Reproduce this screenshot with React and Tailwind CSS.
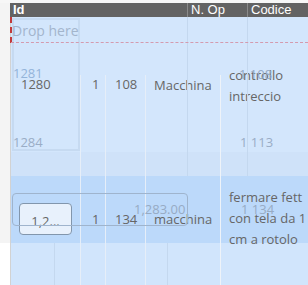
import React from "react";

const font = { fontFamily: '"Open Sans", "Noto Sans", sans-serif' };
const txt = "text-[13px] leading-[18px] text-[#666]";
const ghost = "absolute text-[13px] leading-[18px]";

function Cells({ className = "", children }) {
  const [a, b, c, d, e] = children;
  return (
    <div className={`flex ${className}`}>
      <div className="w-[70px] shrink-0 border-r border-[#e6eef8] flex">{a}</div>
      <div className="w-[25px] shrink-0 border-r border-[#e6eef8] flex">{b}</div>
      <div className="w-[40px] shrink-0 border-r border-[#e6eef8] flex">{c}</div>
      <div className="w-[75px] shrink-0 border-r border-[#eef3f9] flex">{d}</div>
      <div className="flex-1 flex">{e}</div>
    </div>
  );
}

export default function App() {
  return (
    <div className="relative w-[308px] h-[285px] overflow-hidden bg-[#f4f4f4]" style={font}>
      <div className="h-[3px] bg-[#f7f7f7]" />
      {/* header */}
      <div
        className="ml-[10px] h-[14px] bg-[#636363] flex text-white text-[13px] leading-[14px]"
        style={{ fontFamily: '"Liberation Sans", Arial, sans-serif' }}
      >
        <div className="w-[177px] pl-[3px] font-bold">Id</div>
        <div className="w-[60px] pl-[3px] border-l border-[#8a8a8a]">N. Op</div>
        <div className="flex-1 pl-[3px] border-l border-[#8a8a8a]">Codice</div>
      </div>

      {/* body */}
      <div className="relative ml-[10px] h-[268px] border-l border-[#d2d2d2] flex flex-col">
        <Cells className="h-[135px] bg-[#d3e6fc] pt-[58px]">
          <div className={`${txt} pl-[10px] relative z-10`}>1280</div>
          <div className={`${txt} pl-[11px]`}>1</div>
          <div className={`${txt} pl-[9px]`}>108</div>
          <div className={`${txt} pl-[8px] pt-[1px]`}>Macchina</div>
          <div className="text-[13px] leading-[21px] text-[#666] pl-[8px] -mt-[10px]">
            controllo
            <br />
            intreccio
          </div>
        </Cells>
        <Cells className="h-[24px] bg-[#cfe2f9]">
          <div />
          <div />
          <div />
          <div />
          <div />
        </Cells>
        <Cells className="h-[67px] bg-[#bcd9fa] relative z-10">
          <div className="pl-[8px] pt-[27px]">
            <div className="w-[53px] h-[32px] rounded-[4px] border border-[#8296ac] bg-[#e8f1fc] flex items-end justify-center pb-[4px] text-[13px] leading-[18px] text-[#666]">
              1,2...
            </div>
          </div>
          <div className={`${txt} pl-[11px] pt-[34px]`}>1</div>
          <div className={`${txt} pl-[9px] pt-[34px]`}>134</div>
          <div className={`${txt} pl-[8px] pt-[34px]`}>macchina</div>
          <div className="text-[13px] leading-[21px] text-[#666] pl-[8px] pt-[11px] whitespace-nowrap">
            fermare fett
            <br />
            con tela da 1
            <br />
            cm a rotolo
          </div>
        </Cells>
        <Cells className="flex-1 bg-[#d1e5fc]">
          <div />
          <div />
          <div />
          <div />
          <div />
        </Cells>

        {/* faint lines from the dragged layer */}
        <div className="absolute top-0 h-[159px] left-[176px] w-px bg-[#c4d8ef]" />
        <div className="absolute top-0 h-[159px] left-[236px] w-px bg-[#c4d8ef]" />
        <div className="absolute top-[226px] bottom-0 left-[43px] w-px bg-[#c4d8ef]" />
        <div className="absolute top-[226px] bottom-0 left-[156px] w-px bg-[#c4d8ef]" />

        {/* drag ghost box */}
        <div className="absolute left-[1px] top-[1px] w-[68px] h-[133px] border-2 border-[#c6daf1] bg-[#d3e6fc]/60" />

        {/* drop zone */}
        <div className="absolute -left-px top-0 right-0 h-[26px] border-l-2 border-dashed border-[#c23b3b]" />
        <div className="absolute left-0 top-[25px] right-0 h-0 border-t border-dashed border-[#d49aae]" />
        <div className="absolute left-[1px] top-[5px] text-[14px] leading-[18px] text-[#a3b5cc]">Drop here</div>

        {/* ghost values */}
        <div className={`${ghost} left-[2px] top-[47px] text-[#93b4da]`}>1281</div>
        <div className={`${ghost} left-[228px] top-[48px] text-[#93a9c4]`}>1 108</div>
        <div className={`${ghost} left-[2px] top-[116px] text-[#9aadc6]`}>1284</div>
        <div className={`${ghost} left-[229px] top-[116px] text-[#9aadc6]`}>1 113</div>
        <div className="absolute z-20 left-[1px] top-[176px] w-[176px] h-[33px] rounded-[4px] border border-[#9fb4cd]" />
        <div className={`${ghost} z-20 left-[123px] top-[183px] text-[#97abc4]`}>1,283.00</div>
        <div className={`${ghost} z-20 left-[230px] top-[183px] text-[#97abc4]`}>1 134</div>
      </div>
      <div className="absolute left-0 top-[243px] w-[10px] bottom-0 bg-white" />
    </div>
  );
}
